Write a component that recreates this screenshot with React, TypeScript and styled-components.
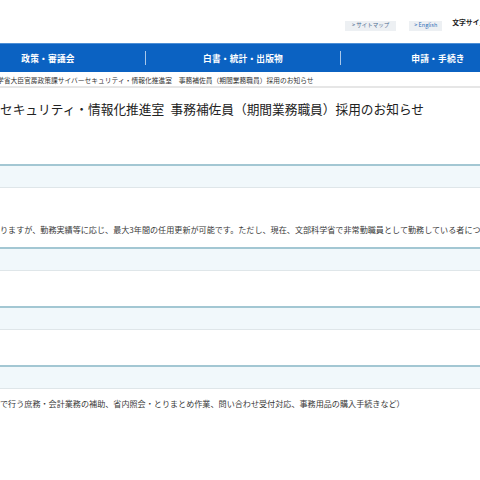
import React from "react";
import styled, { createGlobalStyle } from "styled-components";

const GlobalStyle = createGlobalStyle`
  html, body {
    margin: 0;
    padding: 0;
    background: #ffffff;
    overflow: hidden;
  }
  body {
    font-family: "Noto Sans CJK JP", "Noto Sans", sans-serif;
    color: #333333;
  }
`;

const Page = styled.div`
  width: 480px;
  overflow: hidden;
`;

const UtilityRow = styled.div`
  display: flex;
  align-items: flex-end;
  gap: 13px;
  height: 43px;
  padding-left: 345px;
  padding-bottom: 12px;
  box-sizing: border-box;
  white-space: nowrap;
`;

const UtilityLink = styled.a<{ $accent?: boolean }>`
  display: inline-flex;
  align-items: center;
  height: 10px;
  padding: 0 ${(p) => (p.$accent ? 5 : 7)}px;
  background: #edf0f3;
  font-size: 5.5px;
  line-height: 1;
  color: ${(p) => (p.$accent ? "#2f6fb8" : "#4c6a8f")};
  text-decoration: none;
`;

const FontSizeLabel = styled.span`
  align-self: center;
  margin-top: 13px;
  margin-left: -3px;
  font-size: 6.8px;
  font-weight: 700;
  color: #222;
`;

const NavBar = styled.nav`
  display: flex;
  align-items: center;
  height: 28px;
  background: #0b62c2;
  border-top: 1px solid #4d8fd6;
  margin-left: -49px;
  white-space: nowrap;
`;

const NavItem = styled.a`
  flex: 0 0 194px;
  text-align: center;
  color: #ffffff;
  font-size: 8.7px;
  font-weight: 700;
  text-decoration: none;
  letter-spacing: 0.2px;
`;

const NavDivider = styled.span`
  flex: 0 0 1px;
  height: 14px;
  background: rgba(255, 255, 255, 0.65);
`;

const Breadcrumb = styled.div`
  height: 16px;
  box-sizing: border-box;
  display: flex;
  align-items: center;
  padding-top: 1px;
  margin-left: -3px;
  font-size: 6.75px;
  color: #333;
  white-space: nowrap;
  border-bottom: 2px solid #e6e6e6;
`;

const Title = styled.h1`
  margin: 0;
  height: 40px;
  display: flex;
  align-items: center;
  font-size: 12.7px;
  font-weight: 400;
  color: #222;
  white-space: pre;
`;

const Table = styled.div`
  margin-top: 36px;
  display: flex;
  flex-direction: column;
`;

const HeadRow = styled.div`
  height: 21px;
  border-top: 2px solid #a3c7d3;
  border-bottom: 1px solid #dfe6e9;
  background: #f1f8fb;
`;

const BodyRow = styled.div<{ $h: number; $pad: number }>`
  height: ${(p) => p.$h}px;
  padding-top: ${(p) => p.$pad}px;
  box-sizing: border-box;
  font-size: 8.1px;
  line-height: 12px;
  color: #383838;
  white-space: nowrap;
`;

export default function App() {
  return (
    <>
      <GlobalStyle />
      <Page>
        <UtilityRow>
          <UtilityLink href="#">&gt; サイトマップ</UtilityLink>
          <UtilityLink href="#" $accent>&gt; English</UtilityLink>
          <FontSizeLabel>文字サイズ</FontSizeLabel>
        </UtilityRow>
        <NavBar>
          <NavItem href="#">政策・審議会</NavItem>
          <NavDivider />
          <NavItem href="#">白書・統計・出版物</NavItem>
          <NavDivider />
          <NavItem href="#">申請・手続き</NavItem>
        </NavBar>
        <Breadcrumb>
          学省大臣官房政策課サイバーセキュリティ・情報化推進室　事務補佐員（期間業務職員）採用のお知らせ
        </Breadcrumb>
        <Title>{"セキュリティ・情報化推進室\u2002事務補佐員（期間業務職員）採用のお知らせ"}</Title>
        <Table>
          <HeadRow />
          <BodyRow $h={59} $pad={36}>
            りますが、勤務実績等に応じ、最大3年間の任用更新が可能です。ただし、現在、文部科学省で非常勤職員として勤務している者につ
          </BodyRow>
          <HeadRow />
          <BodyRow $h={35} $pad={0} />
          <HeadRow />
          <BodyRow $h={35} $pad={0} />
          <HeadRow />
          <BodyRow $h={60} $pad={9}>
            で行う庶務・会計業務の補助、省内照会・とりまとめ作業、問い合わせ受付対応、事務用品の購入手続きなど）
          </BodyRow>
        </Table>
      </Page>
    </>
  );
}
